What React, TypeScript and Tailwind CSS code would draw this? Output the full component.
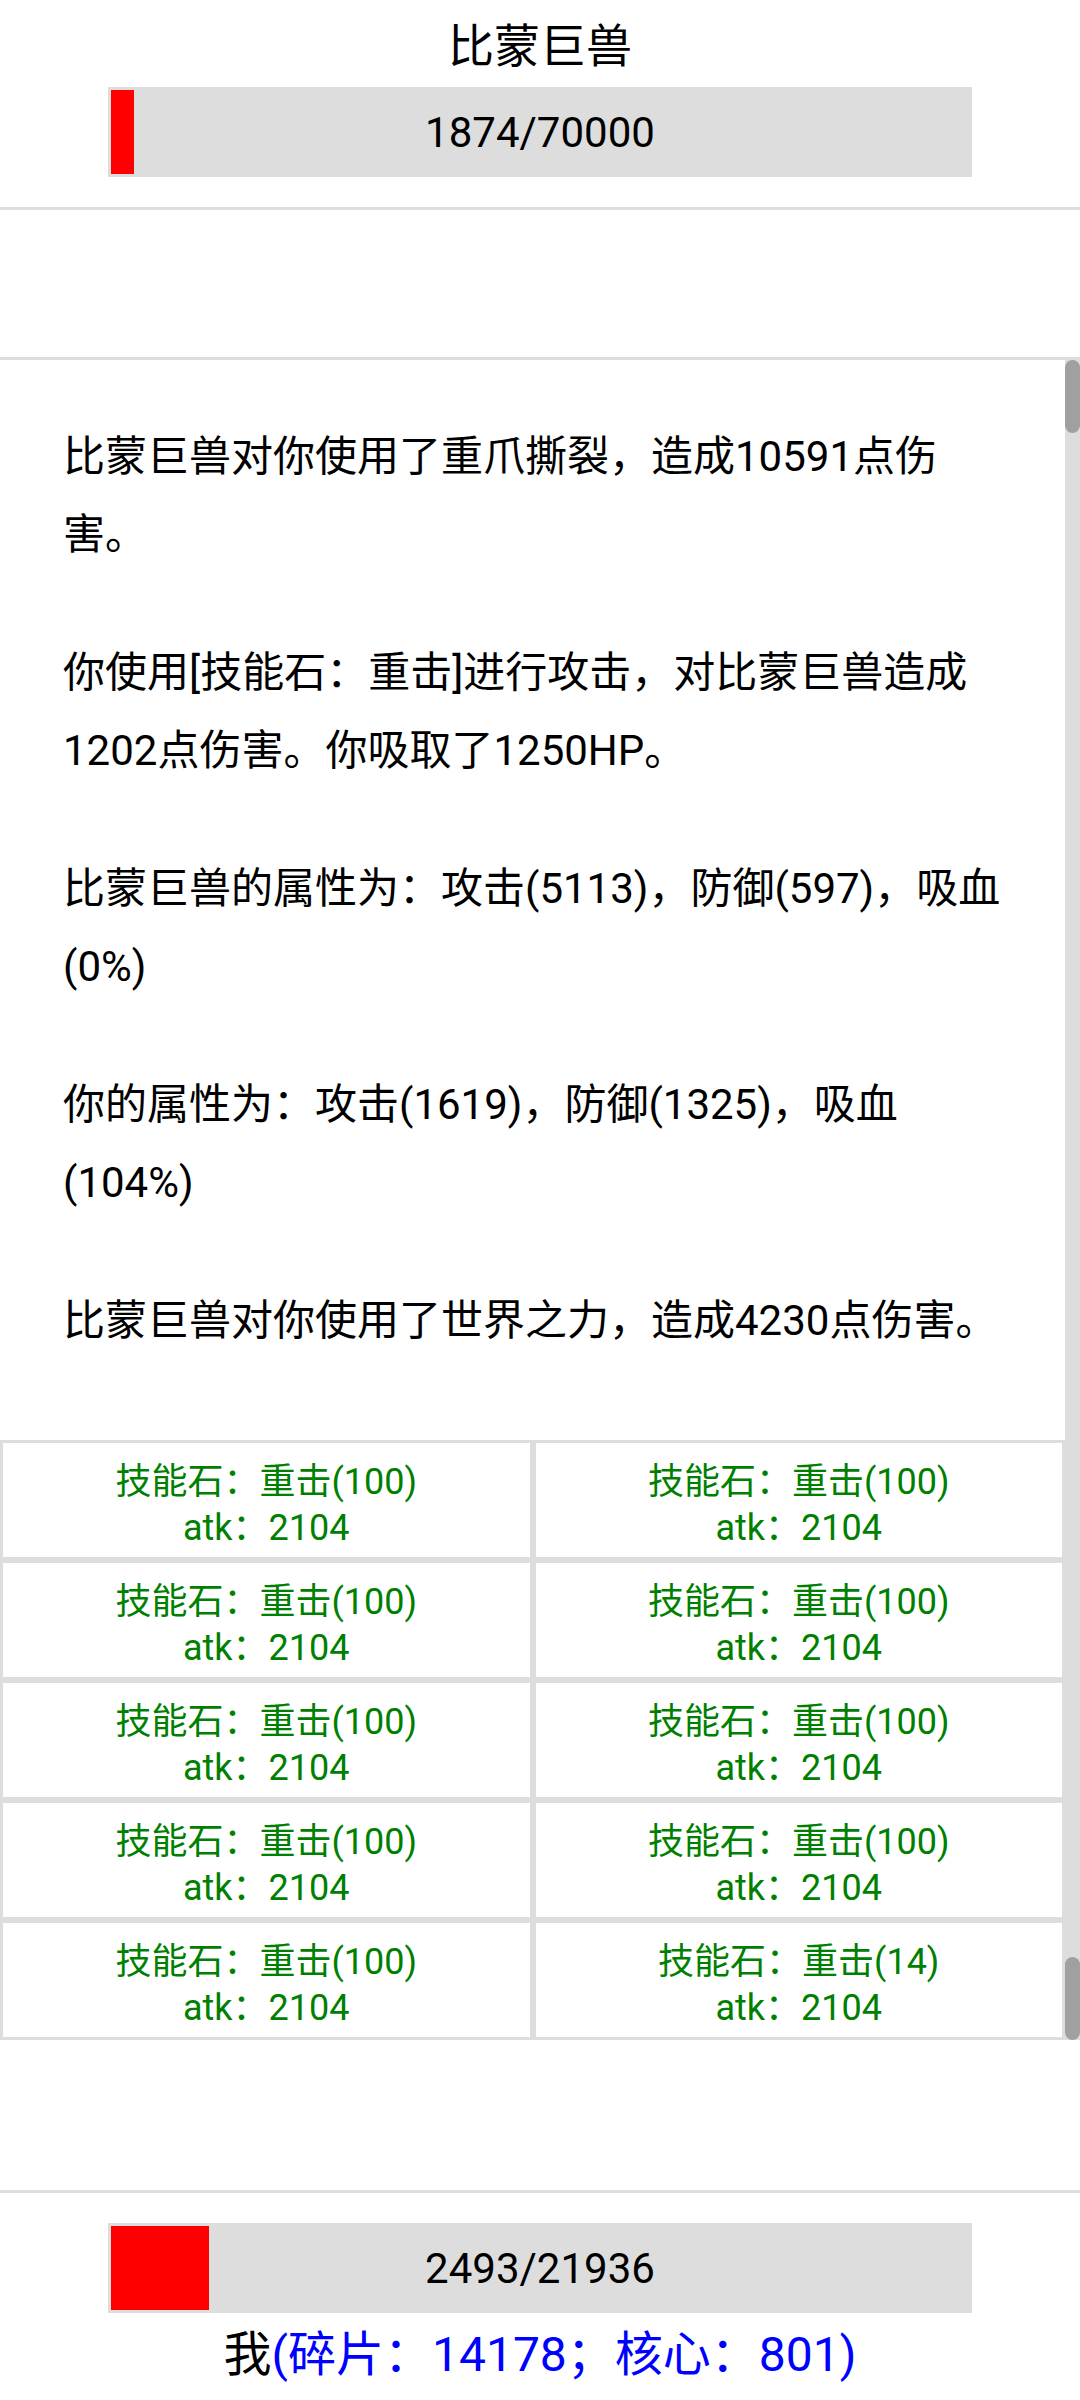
const FONT = "font-['Roboto','Noto_Sans_CJK_SC',sans-serif]";

const LOGS = [
  "比蒙巨兽对你使用了重爪撕裂，造成10591点伤害。",
  "你使用[技能石：重击]进行攻击，对比蒙巨兽造成1202点伤害。你吸取了1250HP。",
  "比蒙巨兽的属性为：攻击(5113)，防御(597)，吸血(0%)",
  "你的属性为：攻击(1619)，防御(1325)，吸血(104%)",
  "比蒙巨兽对你使用了世界之力，造成4230点伤害。",
];

const SKILLS = [
  { name: "技能石：重击(100)", atk: 2104 },
  { name: "技能石：重击(100)", atk: 2104 },
  { name: "技能石：重击(100)", atk: 2104 },
  { name: "技能石：重击(100)", atk: 2104 },
  { name: "技能石：重击(100)", atk: 2104 },
  { name: "技能石：重击(100)", atk: 2104 },
  { name: "技能石：重击(100)", atk: 2104 },
  { name: "技能石：重击(100)", atk: 2104 },
  { name: "技能石：重击(100)", atk: 2104 },
  { name: "技能石：重击(14)", atk: 2104 },
];

function HpBar({ hp, max }: { hp: number; max: number }) {
  const pct = (hp / max) * 100;
  return (
    <div className="relative mx-auto h-[90px] w-[864px] bg-[#dddddd] p-[3px]">
      <div className="h-full bg-[#ff0000]" style={{ width: `${pct}%` }} />
      <div className="absolute inset-0 flex items-center justify-center text-[42px] text-black">
        {hp}/{max}
      </div>
    </div>
  );
}

function ScrollTrack({ thumbTop, thumbHeight }: { thumbTop: number; thumbHeight: number }) {
  return (
    <div className="flex w-[15px] shrink-0 flex-col bg-[#dddddd]">
      <div style={{ height: thumbTop }} />
      <div className="w-full rounded-full bg-[#a0a0a0]" style={{ height: thumbHeight }} />
    </div>
  );
}

export default function App() {
  return (
    <div lang="zh-CN" className={`flex h-[2400px] w-[1080px] flex-col overflow-hidden bg-white ${FONT}`}>
      {/* Boss header */}
      <div className="pt-[16px] pb-[30px]">
        <h1 className="text-center text-[46px] leading-[60px] font-normal text-black">比蒙巨兽</h1>
        <div className="mt-[11px]">
          <HpBar hp={1874} max={70000} />
        </div>
      </div>
      <div className="h-[3px] bg-[#dddddd]" />
      <div className="h-[147px]" />
      <div className="h-[3px] bg-[#dddddd]" />

      {/* Battle log */}
      <div className="flex h-[1080px]">
        <div className="flex-1 overflow-hidden pt-[58px] pr-[57px] pl-[63px]">
          {LOGS.map((line, i) => (
            <p key={i} className="mb-[60px] text-[42px] leading-[78px] text-black">
              {line}
            </p>
          ))}
        </div>
        <ScrollTrack thumbTop={0} thumbHeight={73} />
      </div>

      {/* Skill stones */}
      <div className="flex h-[600px]">
        <div className="grid flex-1 grid-cols-2 content-start overflow-hidden">
          {SKILLS.map((s, i) => (
            <div
              key={i}
              className="flex h-[120px] flex-col items-center justify-center border-[3px] border-[#dddddd] bg-white pt-[9px] text-[36px] leading-[46px] text-[#008000]"
            >
              <span>{s.name}</span>
              <span>atk：{s.atk}</span>
            </div>
          ))}
        </div>
        <ScrollTrack thumbTop={517} thumbHeight={83} />
      </div>

      <div className="h-[150px]" />
      <div className="h-[3px] bg-[#dddddd]" />

      {/* Player */}
      <div className="pt-[30px]">
        <HpBar hp={2493} max={21936} />
        <p className="mt-[11px] text-center text-[48px] leading-[62px] text-black">
          我<span className="text-[#0000ff]">(碎片：14178；核心：801)</span>
        </p>
      </div>
    </div>
  );
}
